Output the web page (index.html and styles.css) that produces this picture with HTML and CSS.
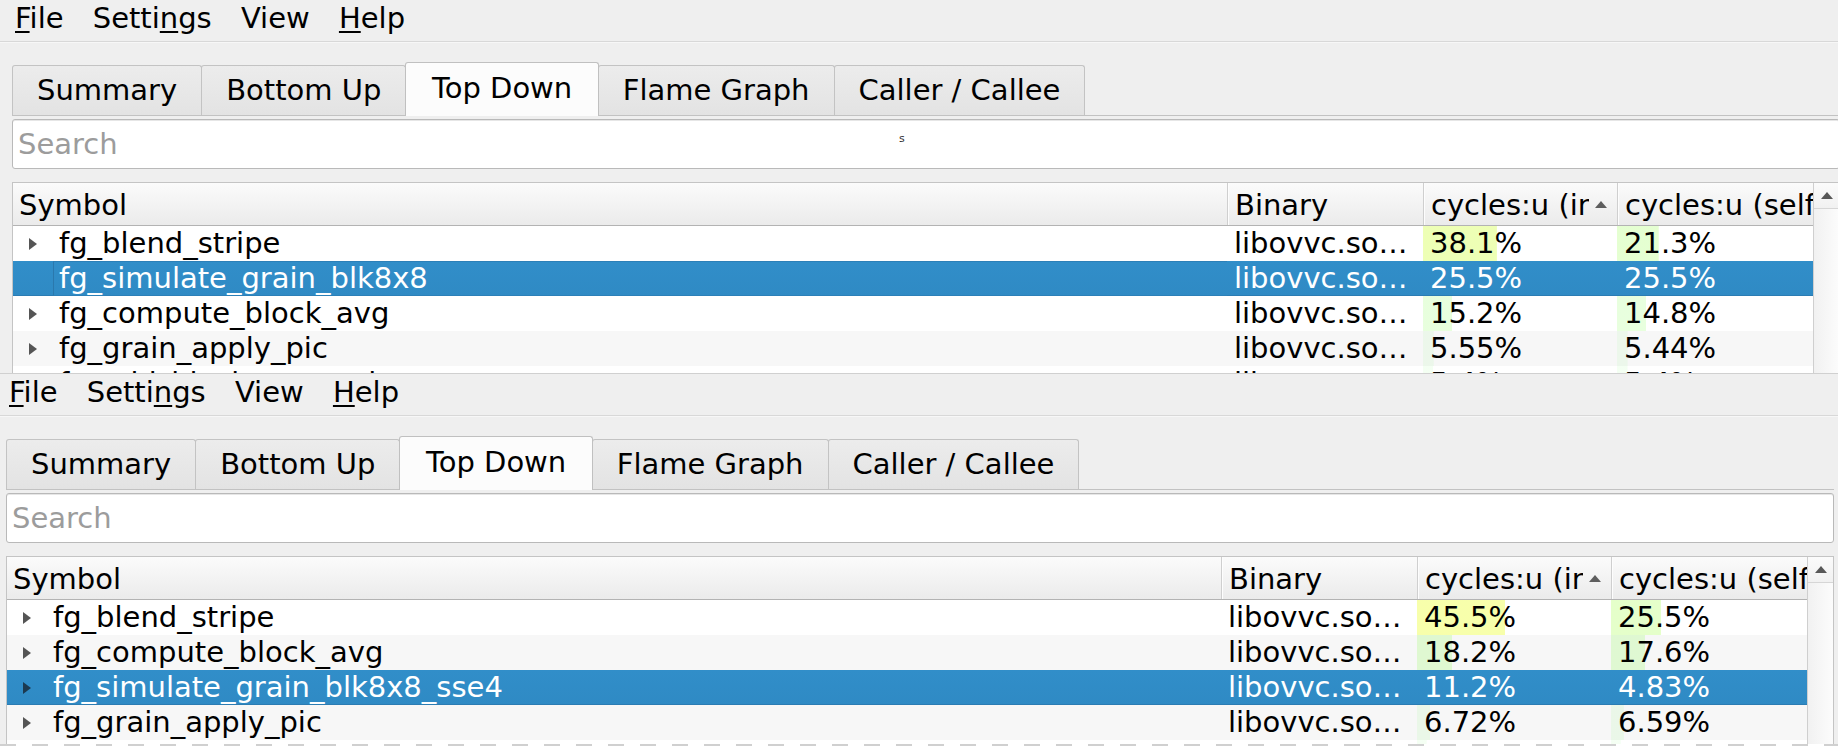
FILE: index.html
```html
<!DOCTYPE html>
<html>
<head>
<meta charset="utf-8">
<link rel="stylesheet" href="styles.css">
</head>
<body>
<div class="screen">
  <section class="window first">
    <nav class="menubar">
      <span class="menu"><u>F</u>ile</span>
      <span class="menu">Setti<u>n</u>gs</span>
      <span class="menu">View</span>
      <span class="menu"><u>H</u>elp</span>
    </nav>
    <div class="content">
      <div class="tabbar">
        <div class="tab">Summary</div>
        <div class="tab">Bottom Up</div>
        <div class="tab active">Top Down</div>
        <div class="tab">Flame Graph</div>
        <div class="tab">Caller / Callee</div>
      </div>
      <div class="search"><span class="placeholder">Search</span><span class="stray">s</span></div>
      <div class="tree">
        <div class="tree-main">
          <div class="hrow">
            <div class="hcell">Symbol</div>
            <div class="hcell">Binary</div>
            <div class="hcell sorted"><span class="hlabel">cycles:u (incl.)</span><span class="sort"></span></div>
            <div class="hcell">cycles:u (self)</div>
          </div>
          <div class="row">
            <div class="cell sym"><span class="exp"></span><span class="label">fg_blend_stripe</span></div>
            <div class="cell">libovvc.so…</div>
            <div class="cell cost" style="--f:0.381">38.1%</div>
            <div class="cell cost" style="--f:0.213">21.3%</div>
          </div>
          <div class="row alt selected">
            <div class="cell sym"><span class="exp leaf"></span><span class="label focus">fg_simulate_grain_blk8x8</span></div>
            <div class="cell">libovvc.so…</div>
            <div class="cell cost" style="--f:0.255">25.5%</div>
            <div class="cell cost" style="--f:0.255">25.5%</div>
          </div>
          <div class="row">
            <div class="cell sym"><span class="exp"></span><span class="label">fg_compute_block_avg</span></div>
            <div class="cell">libovvc.so…</div>
            <div class="cell cost" style="--f:0.152">15.2%</div>
            <div class="cell cost" style="--f:0.148">14.8%</div>
          </div>
          <div class="row alt">
            <div class="cell sym"><span class="exp"></span><span class="label">fg_grain_apply_pic</span></div>
            <div class="cell">libovvc.so…</div>
            <div class="cell cost" style="--f:0.0555">5.55%</div>
            <div class="cell cost" style="--f:0.0544">5.44%</div>
          </div>
          <div class="row">
            <div class="cell sym"><span class="exp"></span><span class="label">fg_add_block_row_stripe</span></div>
            <div class="cell">libovvc.so…</div>
            <div class="cell cost" style="--f:0.054">5.4%</div>
            <div class="cell cost" style="--f:0.054">5.4%</div>
          </div>
        </div>
        <div class="vscroll"><div class="vbtn"><span class="up"></span></div><div class="vtrack"></div></div>
      </div>
    </div>
  </section>

  <section class="window second">
    <nav class="menubar">
      <span class="menu"><u>F</u>ile</span>
      <span class="menu">Setti<u>n</u>gs</span>
      <span class="menu">View</span>
      <span class="menu"><u>H</u>elp</span>
    </nav>
    <div class="content">
      <div class="tabbar">
        <div class="tab">Summary</div>
        <div class="tab">Bottom Up</div>
        <div class="tab active">Top Down</div>
        <div class="tab">Flame Graph</div>
        <div class="tab">Caller / Callee</div>
      </div>
      <div class="search"><span class="placeholder">Search</span></div>
      <div class="tree">
        <div class="tree-main">
          <div class="hrow">
            <div class="hcell">Symbol</div>
            <div class="hcell">Binary</div>
            <div class="hcell sorted"><span class="hlabel">cycles:u (incl.)</span><span class="sort"></span></div>
            <div class="hcell">cycles:u (self)</div>
          </div>
          <div class="row">
            <div class="cell sym"><span class="exp"></span><span class="label">fg_blend_stripe</span></div>
            <div class="cell">libovvc.so…</div>
            <div class="cell cost" style="--f:0.455">45.5%</div>
            <div class="cell cost" style="--f:0.255">25.5%</div>
          </div>
          <div class="row alt">
            <div class="cell sym"><span class="exp"></span><span class="label">fg_compute_block_avg</span></div>
            <div class="cell">libovvc.so…</div>
            <div class="cell cost" style="--f:0.182">18.2%</div>
            <div class="cell cost" style="--f:0.176">17.6%</div>
          </div>
          <div class="row selected">
            <div class="cell sym"><span class="exp"></span><span class="label">fg_simulate_grain_blk8x8_sse4</span></div>
            <div class="cell">libovvc.so…</div>
            <div class="cell cost" style="--f:0.112">11.2%</div>
            <div class="cell cost" style="--f:0.0483">4.83%</div>
          </div>
          <div class="row alt">
            <div class="cell sym"><span class="exp"></span><span class="label">fg_grain_apply_pic</span></div>
            <div class="cell">libovvc.so…</div>
            <div class="cell cost" style="--f:0.0672">6.72%</div>
            <div class="cell cost" style="--f:0.0659">6.59%</div>
          </div>
          <div class="row">
            <div class="cell sym"><span class="exp"></span><span class="label">fg_add_block_row_stripe</span></div>
            <div class="cell">libovvc.so…</div>
            <div class="cell cost" style="--f:0.05">5.0%</div>
            <div class="cell cost" style="--f:0.05">5.0%</div>
          </div>
        </div>
        <div class="vscroll"><div class="vbtn"><span class="up"></span></div><div class="vtrack"></div></div>
      </div>
    </div>
  </section>
  <div class="dashline"></div>
</div>
</body>
</html>
```

FILE: styles.css
```css
* { box-sizing: border-box; }
html, body { margin: 0; padding: 0; }
body {
  width: 1838px;
  height: 746px;
  overflow: hidden;
  background: #efefef;
  font-family: "DejaVu Sans", "Noto Sans", sans-serif;
  font-size: 29px;
  color: #000;
}
.screen {
  display: flex;
  flex-direction: column;
  height: 746px;
  overflow: hidden;
}
.window {
  flex: none;
  width: 1852px;
  overflow: hidden;
  background: #efefef;
  display: flex;
  flex-direction: column;
  padding-top: 1px;
}
.window.first { height: 374px; border-bottom: 1px solid #d0d0d0; }
.window.second { height: 370px; margin-left: -6px; }
.dashline {
  flex: none;
  height: 2px;
  background: repeating-linear-gradient(90deg, #d0d0d0 0 16px, #ffffff 16px 32px);
}

/* menu bar */
.menubar {
  flex: none;
  height: 41px;
  display: flex;
  border-bottom: 1px solid #d8d8d8;
  box-shadow: 0 1px 0 #f7f7f7;
}
.menu {
  padding: 0 14.6px;
  height: 34px;
  line-height: 34px;
  white-space: nowrap;
}
.menu:first-child { padding-left: 15px; }
.menu u {
  text-decoration-thickness: 2px;
  text-underline-offset: 3px;
}

/* content */
.content {
  flex: 1;
  min-height: 0;
  padding: 0 12px;
  display: flex;
  flex-direction: column;
}
.tabbar {
  flex: none;
  margin-top: 20px;
  height: 54px;
  display: flex;
  align-items: flex-end;
  border-bottom: 1px solid #c2c2c2;
}
.tab {
  position: relative;
  height: 50px;
  line-height: 49px;
  padding: 0 24px;
  margin-right: -1px;
  border: 1px solid #c3c3c3;
  border-bottom: none;
  border-radius: 3px 3px 0 0;
  background: linear-gradient(#ececec, #e3e3e3);
  white-space: nowrap;
}
.tab.active {
  z-index: 1;
  height: 54px;
  line-height: 51px;
  padding: 0 25.5px;
  margin-bottom: -1px;
  background: #fcfcfc;
  border-color: #c0c0c0;
}

.search {
  position: relative;
  flex: none;
  margin-top: 3px;
  height: 50px;
  line-height: 48px;
  padding-left: 5px;
  background: #fff;
  border: 1px solid #b9b9b9;
  border-radius: 3px;
  box-shadow: inset 0 1px 0 #e6e6e6;
}
.placeholder { color: #9c9c9c; }
.stray {
  position: absolute;
  left: 886px;
  top: 12px;
  font-size: 11px;
  line-height: 14px;
  color: #333;
}

/* tree */
.tree {
  flex: 1;
  min-height: 0;
  margin-top: 13px;
  display: flex;
  background: #fff;
  border: 1px solid #c4c4c4;
  border-bottom: none;
  overflow: hidden;
}
.tree-main {
  flex: 1;
  min-width: 0;
  display: flex;
  flex-direction: column;
}
.hrow, .row {
  display: grid;
  grid-template-columns: 1fr 196px 194px 196px;
  flex: none;
}
.hrow {
  height: 43px;
  background: linear-gradient(#fbfbfb, #ebebeb);
  border-bottom: 1px solid #b3b3b3;
}
.hcell {
  padding: 2px 0 0 6px;
  line-height: 40px;
  white-space: nowrap;
  overflow: hidden;
  border-left: 1px solid #cfcfcf;
  box-shadow: inset 1px 0 0 #fdfdfd;
}
.hcell:first-child { border-left: none; box-shadow: none; }
.hcell + .hcell { padding-left: 7px; }
.hcell.sorted { display: flex; align-items: center; }
.hlabel {
  flex: 1;
  min-width: 0;
  overflow: hidden;
  white-space: nowrap;
  line-height: 40px;
}
.sort {
  flex: none;
  width: 0;
  height: 0;
  margin: 0 10px 2px 6px;
  border-left: 6px solid transparent;
  border-right: 6px solid transparent;
  border-bottom: 7px solid #5e5e5e;
}

.row {
  height: 35px;
  background: #fff;
}
.row.alt { background: #f7f7f7; }
.row.selected { background: linear-gradient(#318ec9, #2f8ac4); color: #fff; box-shadow: inset 0 -1px 0 #2b7cb3; }
.cell {
  padding-left: 7px;
  line-height: 35px;
  white-space: nowrap;
  overflow: hidden;
}
.cost {
  background-image: linear-gradient(
    hsl(calc(120 - var(--f) * 120) 100% 50% / calc((120 - (1 - var(--f)) * (1 - var(--f)) * 120) / 255)),
    hsl(calc(120 - var(--f) * 120) 100% 50% / calc((120 - (1 - var(--f)) * (1 - var(--f)) * 120) / 255)));
  background-repeat: no-repeat;
  background-size: calc(var(--f) * 100%) 100%;
}
.selected .cost { background-image: none; }

.sym {
  display: flex;
  align-items: center;
  padding-left: 16px;
}
.exp {
  flex: none;
  width: 0;
  height: 0;
  margin-right: 16px;
  border-left: 8px solid #555;
  border-top: 6px solid transparent;
  border-bottom: 6px solid transparent;
}
.selected .exp { border-left-color: #1c3a50; }
.exp.leaf { border-left-color: transparent; }
.label {
  flex: 1;
  min-width: 0;
  height: 35px;
  padding-left: 5px;
  border: 1px solid transparent;
  border-right: none;
  line-height: 33px;
  overflow: hidden;
}
.label.focus { border-color: #2c80b8; border-left-color: #2a78ad; }

/* scrollbar */
.vscroll {
  flex: none;
  width: 26px;
  display: flex;
  flex-direction: column;
  border-left: 1px solid #cfcfcf;
  background: linear-gradient(90deg, #f1f1f1, #fcfcfc);
}
.vbtn {
  flex: none;
  height: 26px;
  display: flex;
  align-items: center;
  justify-content: center;
  background: linear-gradient(#fbfbfb, #f1f1f1);
  border-bottom: 1px solid #d6d6d6;
}
.up {
  width: 0;
  height: 0;
  border-left: 6px solid transparent;
  border-right: 6px solid transparent;
  border-bottom: 7px solid #585858;
}
.vtrack { flex: 1; }
```
